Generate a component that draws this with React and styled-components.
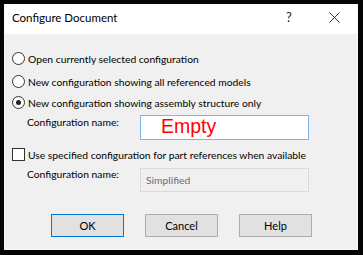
import React from 'react';
import styled, { createGlobalStyle } from 'styled-components';

const GlobalStyle = createGlobalStyle`
  html, body {
    margin: 0;
    padding: 0;
    background: #050505;
    width: 363px;
    height: 255px;
    overflow: hidden;
  }
  body {
    font-family: Lato, "Noto Sans", sans-serif;
    font-size: 10.3px;
    color: #000;
  }
`;

const Screen = styled.div`
  width: 363px;
  height: 255px;
  padding: 4px 0 0 4px;
  box-sizing: border-box;
`;

const Dialog = styled.div`
  width: 354px;
  height: 246px;
  box-sizing: border-box;
  border: 1px solid #f8f8f8;
  border-top: none;
  background: #f0f0f0;
  display: flex;
  flex-direction: column;
`;

const TitleBar = styled.div`
  height: 30px;
  background: #fff;
  display: flex;
  align-items: center;
  padding-left: 7px;
`;

const Title = styled.div`
  flex: 1;
  font-size: 11.5px;
  padding-bottom: 4px;
`;

const TitleIcon = styled.div`
  width: ${p => p.$w}px;
  height: 30px;
  display: flex;
  align-items: center;
  justify-content: center;
  color: #222;
  font-size: 13px;
  padding-bottom: 4px;
  box-sizing: border-box;
`;

const Body = styled.div`
  flex: 1;
  padding: 14px 0 0 7px;
  display: flex;
  flex-direction: column;
`;

const OptionRow = styled.label`
  height: 21px;
  display: flex;
  align-items: center;
  gap: 3px;
  margin-top: ${p => p.$mt || 0}px;
  white-space: nowrap;
`;

const Radio = styled.span`
  width: 13px;
  height: 13px;
  box-sizing: border-box;
  border: 1px solid #333;
  border-radius: 50%;
  background: #fff;
  display: flex;
  align-items: center;
  justify-content: center;
  flex: none;
  &::after {
    content: '';
    width: 5px;
    height: 5px;
    border-radius: 50%;
    background: ${p => (p.$checked ? '#222' : 'transparent')};
  }
`;

const Checkbox = styled.span`
  width: 13px;
  height: 13px;
  box-sizing: border-box;
  border: 1px solid #333;
  background: #fff;
  flex: none;
`;

const FieldRow = styled.div`
  display: flex;
  margin-top: ${p => p.$mt || 0}px;
  padding-left: 15px;
`;

const FieldLabel = styled.div`
  width: 113px;
  padding-top: ${p => p.$pt || 0}px;
  white-space: nowrap;
`;

const TextBox = styled.div`
  width: 169px;
  height: ${p => p.$h}px;
  box-sizing: border-box;
  border: 1px solid ${p => (p.$disabled ? '#dadada' : '#7eb4ea')};
  background: ${p => (p.$disabled ? '#f0f0f0' : '#fff')};
  color: ${p => (p.$disabled ? '#6d6d6d' : '#000')};
  display: flex;
  align-items: center;
  padding-left: 5px;
`;

const EmptyText = styled.span`
  color: #ff0000;
  font-family: "Liberation Sans", Arial, sans-serif;
  font-size: 19.5px;
  margin-left: 15px;
  margin-top: -2px;
  line-height: 1;
`;

const ButtonRow = styled.div`
  display: flex;
  gap: 21px;
  margin-top: 22px;
  padding-left: 39px;
`;

const Button = styled.button`
  width: 73px;
  height: 23px;
  box-sizing: border-box;
  border: 1px solid ${p => (p.$default ? '#0078d7' : '#adadad')};
  background: #e1e1e1;
  font-family: inherit;
  font-size: 11px;
  color: #000;
  padding: 0;
`;

const CloseIcon = () => (
  <svg width="11" height="11" viewBox="0 0 11 11">
    <path d="M0.5 0.5 L10.5 10.5 M10.5 0.5 L0.5 10.5" stroke="#333" strokeWidth="1" fill="none" />
  </svg>
);

export default function App() {
  return (
    <Screen>
      <GlobalStyle />
      <Dialog>
        <TitleBar>
          <Title>Configure Document</Title>
          <TitleIcon $w={44}>?</TitleIcon>
          <TitleIcon $w={46}>
            <CloseIcon />
          </TitleIcon>
        </TitleBar>
        <Body>
          <OptionRow>
            <Radio />
            Open currently selected configuration
          </OptionRow>
          <OptionRow $mt={2}>
            <Radio />
            New configuration showing all referenced models
          </OptionRow>
          <OptionRow>
            <Radio $checked />
            New configuration showing assembly structure only
          </OptionRow>
          <FieldRow $mt={2}>
            <FieldLabel $pt={1}>Configuration name:</FieldLabel>
            <TextBox $h={25}>
              <EmptyText>Empty</EmptyText>
            </TextBox>
          </FieldRow>
          <OptionRow $mt={4}>
            <Checkbox />
            Use specified configuration for part references when available
          </OptionRow>
          <FieldRow $mt={3}>
            <FieldLabel $pt={0}>Configuration name:</FieldLabel>
            <TextBox $h={24} $disabled>
              Simplified
            </TextBox>
          </FieldRow>
          <ButtonRow>
            <Button $default>OK</Button>
            <Button>Cancel</Button>
            <Button>Help</Button>
          </ButtonRow>
        </Body>
      </Dialog>
    </Screen>
  );
}
